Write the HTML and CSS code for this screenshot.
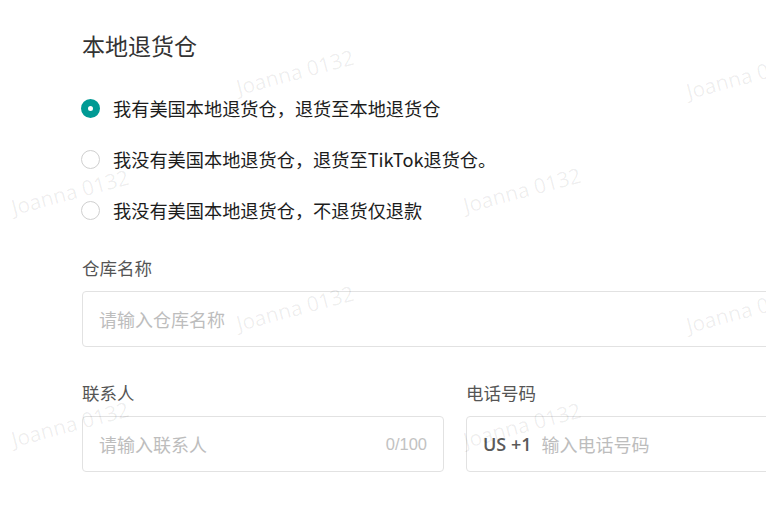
FILE: index.html
```html
<!DOCTYPE html>
<html lang="zh-CN">
<head>
<meta charset="utf-8">
<title>本地退货仓</title>
<link rel="stylesheet" href="styles.css">
</head>
<body>
<main class="page">
  <h1 class="title">本地退货仓</h1>
  <div class="radios">
    <label class="radio-row"><span class="radio checked"></span><span class="radio-text">我有美国本地退货仓，退货至本地退货仓</span></label>
    <label class="radio-row"><span class="radio"></span><span class="radio-text">我没有美国本地退货仓，退货至TikTok退货仓。</span></label>
    <label class="radio-row"><span class="radio"></span><span class="radio-text">我没有美国本地退货仓，不退货仅退款</span></label>
  </div>
  <div class="field">
    <div class="label">仓库名称</div>
    <div class="input"><span class="placeholder">请输入仓库名称</span></div>
  </div>
  <div class="field-row">
    <div class="field">
      <div class="label">联系人</div>
      <div class="input"><span class="placeholder">请输入联系人</span><span class="count">0/100</span></div>
    </div>
    <div class="field">
      <div class="label">电话号码</div>
      <div class="input"><span class="prefix">US +1</span><span class="placeholder">输入电话号码</span></div>
    </div>
  </div>
</main>
<div class="watermarks" aria-hidden="true">
  <span class="wm wm1">Joanna 0132</span>
  <span class="wm wm2">Joanna 0132</span>
  <span class="wm wm3">Joanna 0132</span>
  <span class="wm wm4">Joanna 0132</span>
  <span class="wm wm5">Joanna 0132</span>
  <span class="wm wm6">Joanna 0132</span>
  <span class="wm wm7">Joanna 0132</span>
  <span class="wm wm8">Joanna 0132</span>
</div>
</body>
</html>
```

FILE: styles.css
```css
html, body {
  margin: 0;
  padding: 0;
  background: #ffffff;
  overflow: hidden;
}
body {
  width: 766px;
  height: 508px;
  position: relative;
  font-family: "Noto Sans CJK SC", "Liberation Sans", sans-serif;
}
.page {
  padding: 30px 0 0 81px;
  width: 747px;
}
.title {
  margin: 0 0 0 1px;
  font-size: 23px;
  line-height: 30px;
  font-weight: 400;
  color: #333333;
}
.radios {
  margin-top: 36px;
  display: flex;
  flex-direction: column;
  gap: 27px;
}
.radio-row {
  display: flex;
  align-items: center;
  height: 24px;
}
.radio {
  box-sizing: border-box;
  width: 19px;
  height: 19px;
  border-radius: 50%;
  border: 1.5px solid #cfcfcf;
  background: #fff;
  flex: none;
}
.radio.checked {
  border: 7px solid #009a94;
}
.radio-text {
  margin-left: 13px;
  font-size: 18.2px;
  line-height: 24px;
  color: #1c1c1c;
}
.field {
  margin-top: 34px;
}
.label {
  margin-left: 1px;
  font-size: 17.5px;
  line-height: 24px;
  color: #555555;
}
.input {
  box-sizing: border-box;
  margin-left: 1px;
  margin-top: 11px;
  height: 56px;
  border: 1px solid #e2e2e2;
  border-radius: 4px;
  padding: 0 16px;
  display: flex;
  align-items: center;
}
.placeholder {
  font-size: 18px;
  color: #bdbdbd;
  flex: 1;
}
.count {
  font-family: "Liberation Sans", sans-serif;
  font-size: 16.5px;
  color: #c2c2c2;
}
.prefix {
  font-family: "Open Sans", "Liberation Sans", sans-serif;
  font-weight: 600;
  font-size: 18px;
  color: #5a5a5a;
  margin-right: 10px;
}
.field-row {
  display: grid;
  grid-template-columns: 363px 363px;
  column-gap: 21px;
}
.watermarks {
  position: absolute;
  inset: 0;
  pointer-events: none;
  z-index: 2;
}
.wm {
  position: absolute;
  font-family: "Open Sans", sans-serif;
  font-size: 21px;
  color: rgba(0, 0, 0, 0.07);
  white-space: nowrap;
  transform: translate(-50%, -50%) rotate(-15deg);
}
.wm1 { left: 295px; top: 72px; }
.wm2 { left: 745px; top: 76px; }
.wm3 { left: 70px; top: 192px; }
.wm4 { left: 522px; top: 190px; }
.wm5 { left: 295px; top: 308px; }
.wm6 { left: 745px; top: 310px; }
.wm7 { left: 70px; top: 424px; }
.wm8 { left: 522px; top: 425px; }
```
